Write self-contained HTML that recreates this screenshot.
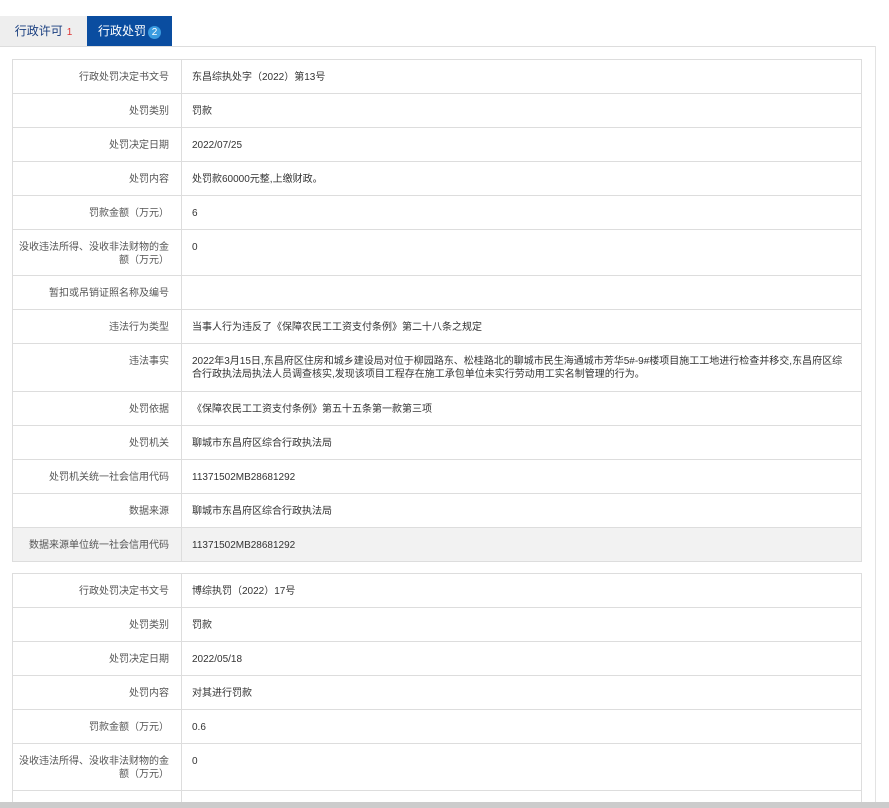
<!DOCTYPE html>
<html><head><meta charset="utf-8"><style>
html,body{margin:0;overflow:hidden}
body{background:#fff;font-family:"Liberation Sans","Noto Sans CJK SC",sans-serif;width:889px;height:808px;position:relative}
.tabs{position:absolute;top:16px;left:0;height:30px;width:875px;border-bottom:1px solid #ddd}
.tab{position:absolute;top:0;height:30px;line-height:30px;font-size:12px;text-align:center}
.t1{left:0;width:87px;background:#eee;color:#1a3f80}
.t1 b{color:#d33;font-weight:normal;font-size:10px;margin-left:4px}
.t2{left:87px;width:85px;background:#0a4da0;color:#fff}
.t2 b{display:inline-block;width:13px;height:13px;line-height:13px;border-radius:7px;background:#3a9be0;font-weight:normal;font-size:10px;margin-left:2px;vertical-align:0px}
.vline{position:absolute;left:875px;top:46px;width:1px;height:762px;background:#e3e3e3}
table{position:absolute;left:12px;width:850px;border-collapse:collapse;font-size:10px;color:#333}
td{border:1px solid #ddd;padding:11px 10px 0 10px;vertical-align:top;line-height:13px;box-sizing:border-box}
td.l{width:169px;text-align:right;color:#555;padding-left:4px;padding-right:12px}
tr.g td{background:#f2f2f2}
.bar{position:absolute;left:0;top:802px;width:889px;height:6px;background:#ccc}
</style></head><body>
<div class="tabs"><div class="tab t1">行政许可<b>1</b></div><div class="tab t2">行政处罚<b>2</b></div></div>
<div class="vline"></div>
<table style="top:59px">
<tr style="height:34px"><td class="l">行政处罚决定书文号</td><td>东昌综执处字（2022）第13号</td></tr>
<tr style="height:34px"><td class="l">处罚类别</td><td>罚款</td></tr>
<tr style="height:34px"><td class="l">处罚决定日期</td><td>2022/07/25</td></tr>
<tr style="height:34px"><td class="l">处罚内容</td><td>处罚款60000元整,上缴财政。</td></tr>
<tr style="height:34px"><td class="l">罚款金额（万元）</td><td>6</td></tr>
<tr style="height:46px"><td class="l">没收违法所得、没收非法财物的金额（万元）</td><td>0</td></tr>
<tr style="height:34px"><td class="l">暂扣或吊销证照名称及编号</td><td></td></tr>
<tr style="height:34px"><td class="l">违法行为类型</td><td>当事人行为违反了《保障农民工工资支付条例》第二十八条之规定</td></tr>
<tr style="height:48px"><td class="l">违法事实</td><td>2022年3月15日,东昌府区住房和城乡建设局对位于柳园路东、松桂路北的聊城市民生海通城市芳华5#-9#楼项目施工工地进行检查并移交,东昌府区综合行政执法局执法人员调查核实,发现该项目工程存在施工承包单位未实行劳动用工实名制管理的行为。</td></tr>
<tr style="height:34px"><td class="l">处罚依据</td><td>《保障农民工工资支付条例》第五十五条第一款第三项</td></tr>
<tr style="height:34px"><td class="l">处罚机关</td><td>聊城市东昌府区综合行政执法局</td></tr>
<tr style="height:34px"><td class="l">处罚机关统一社会信用代码</td><td>11371502MB28681292</td></tr>
<tr style="height:34px"><td class="l">数据来源</td><td>聊城市东昌府区综合行政执法局</td></tr>
<tr class="g" style="height:34px"><td class="l">数据来源单位统一社会信用代码</td><td>11371502MB28681292</td></tr>
</table>
<table style="top:573px">
<tr style="height:34px"><td class="l">行政处罚决定书文号</td><td>博综执罚（2022）17号</td></tr>
<tr style="height:34px"><td class="l">处罚类别</td><td>罚款</td></tr>
<tr style="height:34px"><td class="l">处罚决定日期</td><td>2022/05/18</td></tr>
<tr style="height:34px"><td class="l">处罚内容</td><td>对其进行罚款</td></tr>
<tr style="height:34px"><td class="l">罚款金额（万元）</td><td>0.6</td></tr>
<tr style="height:47px"><td class="l">没收违法所得、没收非法财物的金额（万元）</td><td>0</td></tr>
<tr style="height:34px"><td class="l">暂扣或吊销证照名称及编号</td><td></td></tr>
</table>
<div class="bar"></div>
</body></html>
